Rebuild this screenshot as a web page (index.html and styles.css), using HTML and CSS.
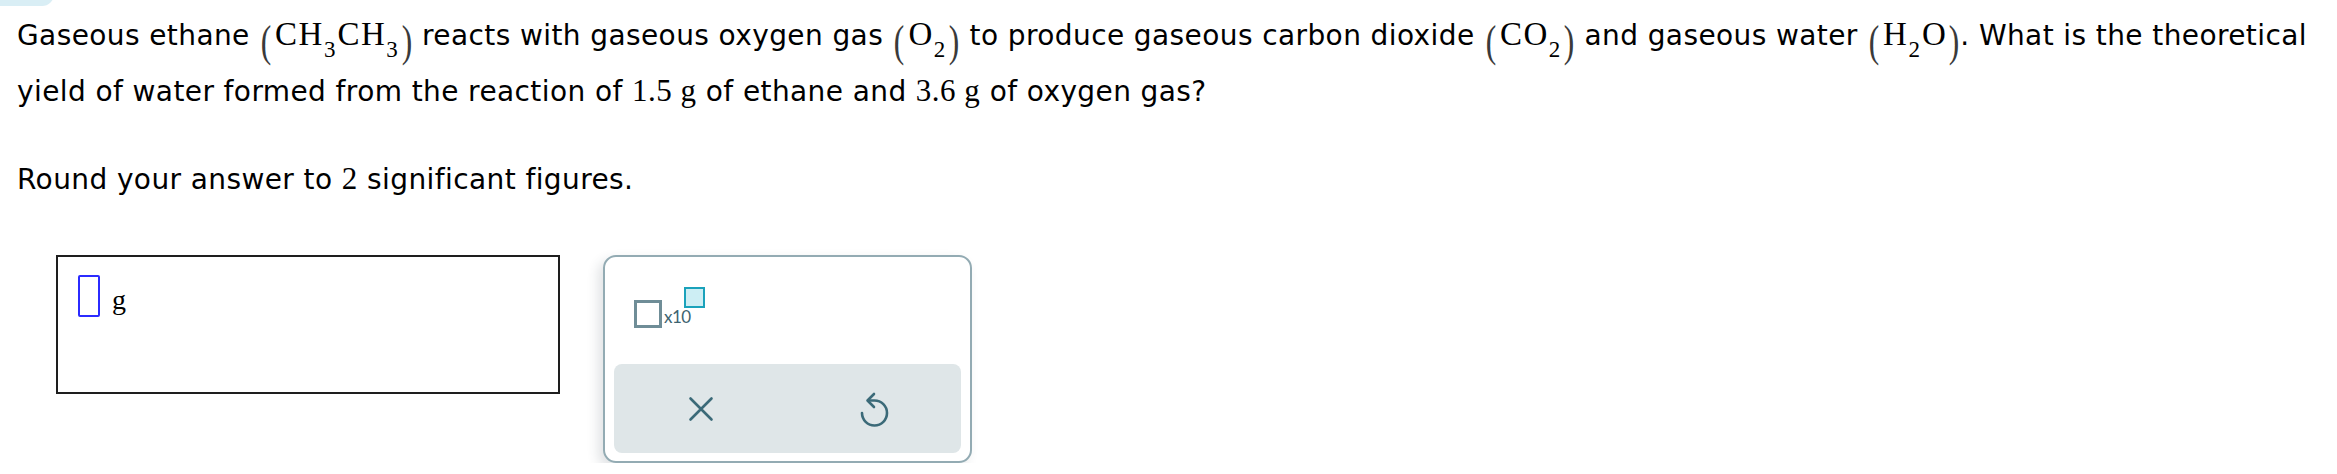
FILE: index.html
```html
<!DOCTYPE html>
<html lang="en">
<head>
<meta charset="utf-8">
<title>Theoretical yield</title>
<link rel="stylesheet" href="styles.css">
</head>
<body>
<div class="tab"></div>
<main class="page">
  <p class="question">Gaseous ethane <span class="math"><span class="paren open">(</span>CH<sub>3</sub>CH<sub>3</sub><span class="paren close">)</span></span> reacts with gaseous oxygen gas <span class="math"><span class="paren open">(</span>O<sub>2</sub><span class="paren close">)</span></span> to produce gaseous carbon dioxide <span class="math"><span class="paren open">(</span>CO<sub>2</sub><span class="paren close">)</span></span> and gaseous water <span class="math"><span class="paren open">(</span>H<sub>2</sub>O<span class="paren close">)</span></span>. What is the theoretical yield of water formed from the reaction of <span class="num">1.5 g</span> of ethane and <span class="num">3.6 g</span> of oxygen gas?</p>
  <p class="instruction">Round your answer to <span class="num">2</span> significant figures.</p>
  <div class="answer-row">
    <div class="answer-box">
      <span class="slot"></span>
      <span class="unit">g</span>
    </div>
    <div class="tools">
      <div class="sci">
        <span class="sci-base"></span>
        <span class="sci-text">x10</span>
        <span class="sci-exp"></span>
      </div>
      <div class="actions">
        <button class="action" type="button" aria-label="Clear">
          <svg width="26" height="26" viewBox="0 0 26 26"><path d="M2.5 2.5 L23.5 23.5 M23.5 2.5 L2.5 23.5" fill="none" stroke="#3b6a78" stroke-width="2.6" stroke-linecap="round"/></svg>
        </button>
        <button class="action" type="button" aria-label="Undo">
          <svg width="32" height="36" viewBox="0 0 32 36"><path d="M4 22 A12.5 12.5 0 1 0 16.5 9.5 L12 9.5" fill="none" stroke="#3b6a78" stroke-width="2.6" stroke-linecap="round"/><path d="M16 3 L9.5 9.5 L16 16" fill="none" stroke="#3b6a78" stroke-width="2.6" stroke-linecap="round" stroke-linejoin="round"/></svg>
        </button>
      </div>
    </div>
  </div>
</main>
</body>
</html>
```
FILE: styles.css
```css
* { box-sizing: border-box; }
html, body { margin: 0; background: #fff; }
body {
  font-family: "DejaVu Sans", Verdana, sans-serif;
  font-size: 28px;
  letter-spacing: 0.4px;
  color: #000;
}
.tab {
  position: absolute;
  top: -20px;
  left: 0;
  width: 54px;
  height: 26px;
  background: #d9eef5;
  border-radius: 0 0 12px 0;
}
.page {
  padding: 8px 10px 0 17px;
}
.question, .instruction {
  margin: 0;
  line-height: 56px;
}
.instruction { margin-top: 32px; }
.math, .num {
  font-family: "Liberation Serif", "Times New Roman", serif;
  font-size: 33px;
  line-height: 0;
}
.math { letter-spacing: 1.5px; }
.num { font-size: 31px; letter-spacing: 0.5px; }
.math sub {
  font-size: 23px;
  line-height: 0;
  vertical-align: -12px;
  letter-spacing: 2px;
}
.paren {
  display: inline-block;
  font-size: 30px;
  line-height: 30px;
  letter-spacing: 0;
  vertical-align: -6px;
  transform: scale(1.05, 1.46);
  color: #3a3a3a;
}
.paren.open { margin: 0 4px 0 2px; }
.paren.close { margin: 0 1px 0 2px; }
.answer-row {
  display: flex;
  align-items: flex-start;
  gap: 43px;
  margin-top: 47px;
  padding-left: 39px;
}
.answer-box {
  width: 504px;
  height: 139px;
  border: 2px solid #1e1e1e;
  display: flex;
  align-items: flex-start;
  gap: 12px;
  padding: 18px 20px;
}
.slot {
  width: 22px;
  height: 42px;
  border: 2px solid #2b2bff;
  border-radius: 2px;
}
.unit {
  font-family: "Liberation Serif", "Times New Roman", serif;
  font-size: 28px;
  line-height: 28px;
  margin-top: 11px;
}
.tools {
  width: 369px;
  height: 208px;
  border: 2px solid #93abb3;
  border-radius: 13px;
  box-shadow: -5px 5px 12px rgba(40, 60, 70, 0.14);
  display: flex;
  flex-direction: column;
  justify-content: space-between;
  padding: 30px 9px 8px;
}
.sci {
  display: flex;
  align-items: flex-end;
  height: 41px;
  padding-left: 20px;
}
.sci-base {
  width: 28px;
  height: 28px;
  border: 3px solid #6f8d97;
}
.sci-text {
  font-family: Lato, "Open Sans", sans-serif;
  font-size: 17px;
  line-height: 17px;
  color: #3d6370;
  margin-left: 2px;
  margin-bottom: 3px;
  letter-spacing: -0.5px;
}
.sci-exp {
  align-self: flex-start;
  width: 21px;
  height: 21px;
  border: 2px solid #1aa2bb;
  background: #cdeef4;
  margin-left: -7px;
}
.actions {
  display: flex;
  height: 89px;
  background: #dfe6e8;
  border-radius: 8px;
}
.action {
  flex: 1;
  display: flex;
  align-items: center;
  justify-content: center;
  background: none;
  border: 0;
  padding: 0;
}
```
